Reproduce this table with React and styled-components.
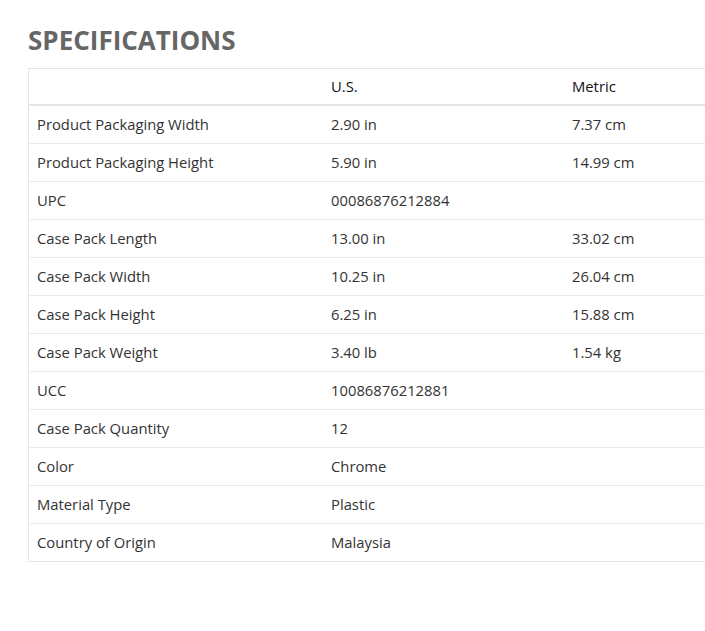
import React from "react";
import styled, { createGlobalStyle } from "styled-components";

const Global = createGlobalStyle`
  html, body { margin: 0; padding: 0; background: #fff; overflow: hidden; }
  body { font-family: "Open Sans", "Noto Sans", sans-serif; }
`;

const Page = styled.div`
  padding: 24px 0 0 28px;
  width: 677px;
  overflow: hidden;
`;

const Title = styled.h2`
  margin: 0 0 12px 0;
  font-size: 26px;
  line-height: 32px;
  font-weight: 700;
  color: #666;
`;

const Table = styled.table`
  width: 780px;
  border-collapse: collapse;
  border: 1px solid #e6e6e6;
  font-size: 14.8px;
  color: #333;
`;

const HeadCell = styled.th`
  text-align: left;
  font-weight: 500;
  color: #111;
  padding: 8px 8px;
  height: 19px;
  line-height: 19px;
  border-bottom: 2px solid #e6e6e6;
  width: ${(p) => p.$w || "auto"};
`;

const Row = styled.tr`
  border-top: 1px solid #e9e9e9;
`;

const Cell = styled.td`
  padding: 8px 8px;
  line-height: 21px;
  height: 21px;
`;

const rows = [
  ["Product Packaging Width", "2.90 in", "7.37 cm"],
  ["Product Packaging Height", "5.90 in", "14.99 cm"],
  ["UPC", "00086876212884", ""],
  ["Case Pack Length", "13.00 in", "33.02 cm"],
  ["Case Pack Width", "10.25 in", "26.04 cm"],
  ["Case Pack Height", "6.25 in", "15.88 cm"],
  ["Case Pack Weight", "3.40 lb", "1.54 kg"],
  ["UCC", "10086876212881", ""],
  ["Case Pack Quantity", "12", ""],
  ["Color", "Chrome", ""],
  ["Material Type", "Plastic", ""],
  ["Country of Origin", "Malaysia", ""],
];

export default function App() {
  return (
    <>
      <Global />
      <Page>
        <Title>SPECIFICATIONS</Title>
        <Table>
          <thead>
            <tr>
              <HeadCell $w="278px"></HeadCell>
              <HeadCell $w="225px">U.S.</HeadCell>
              <HeadCell>Metric</HeadCell>
            </tr>
          </thead>
          <tbody>
            {rows.map((r) => (
              <Row key={r[0]}>
                <Cell>{r[0]}</Cell>
                <Cell>{r[1]}</Cell>
                <Cell>{r[2]}</Cell>
              </Row>
            ))}
          </tbody>
        </Table>
      </Page>
    </>
  );
}
